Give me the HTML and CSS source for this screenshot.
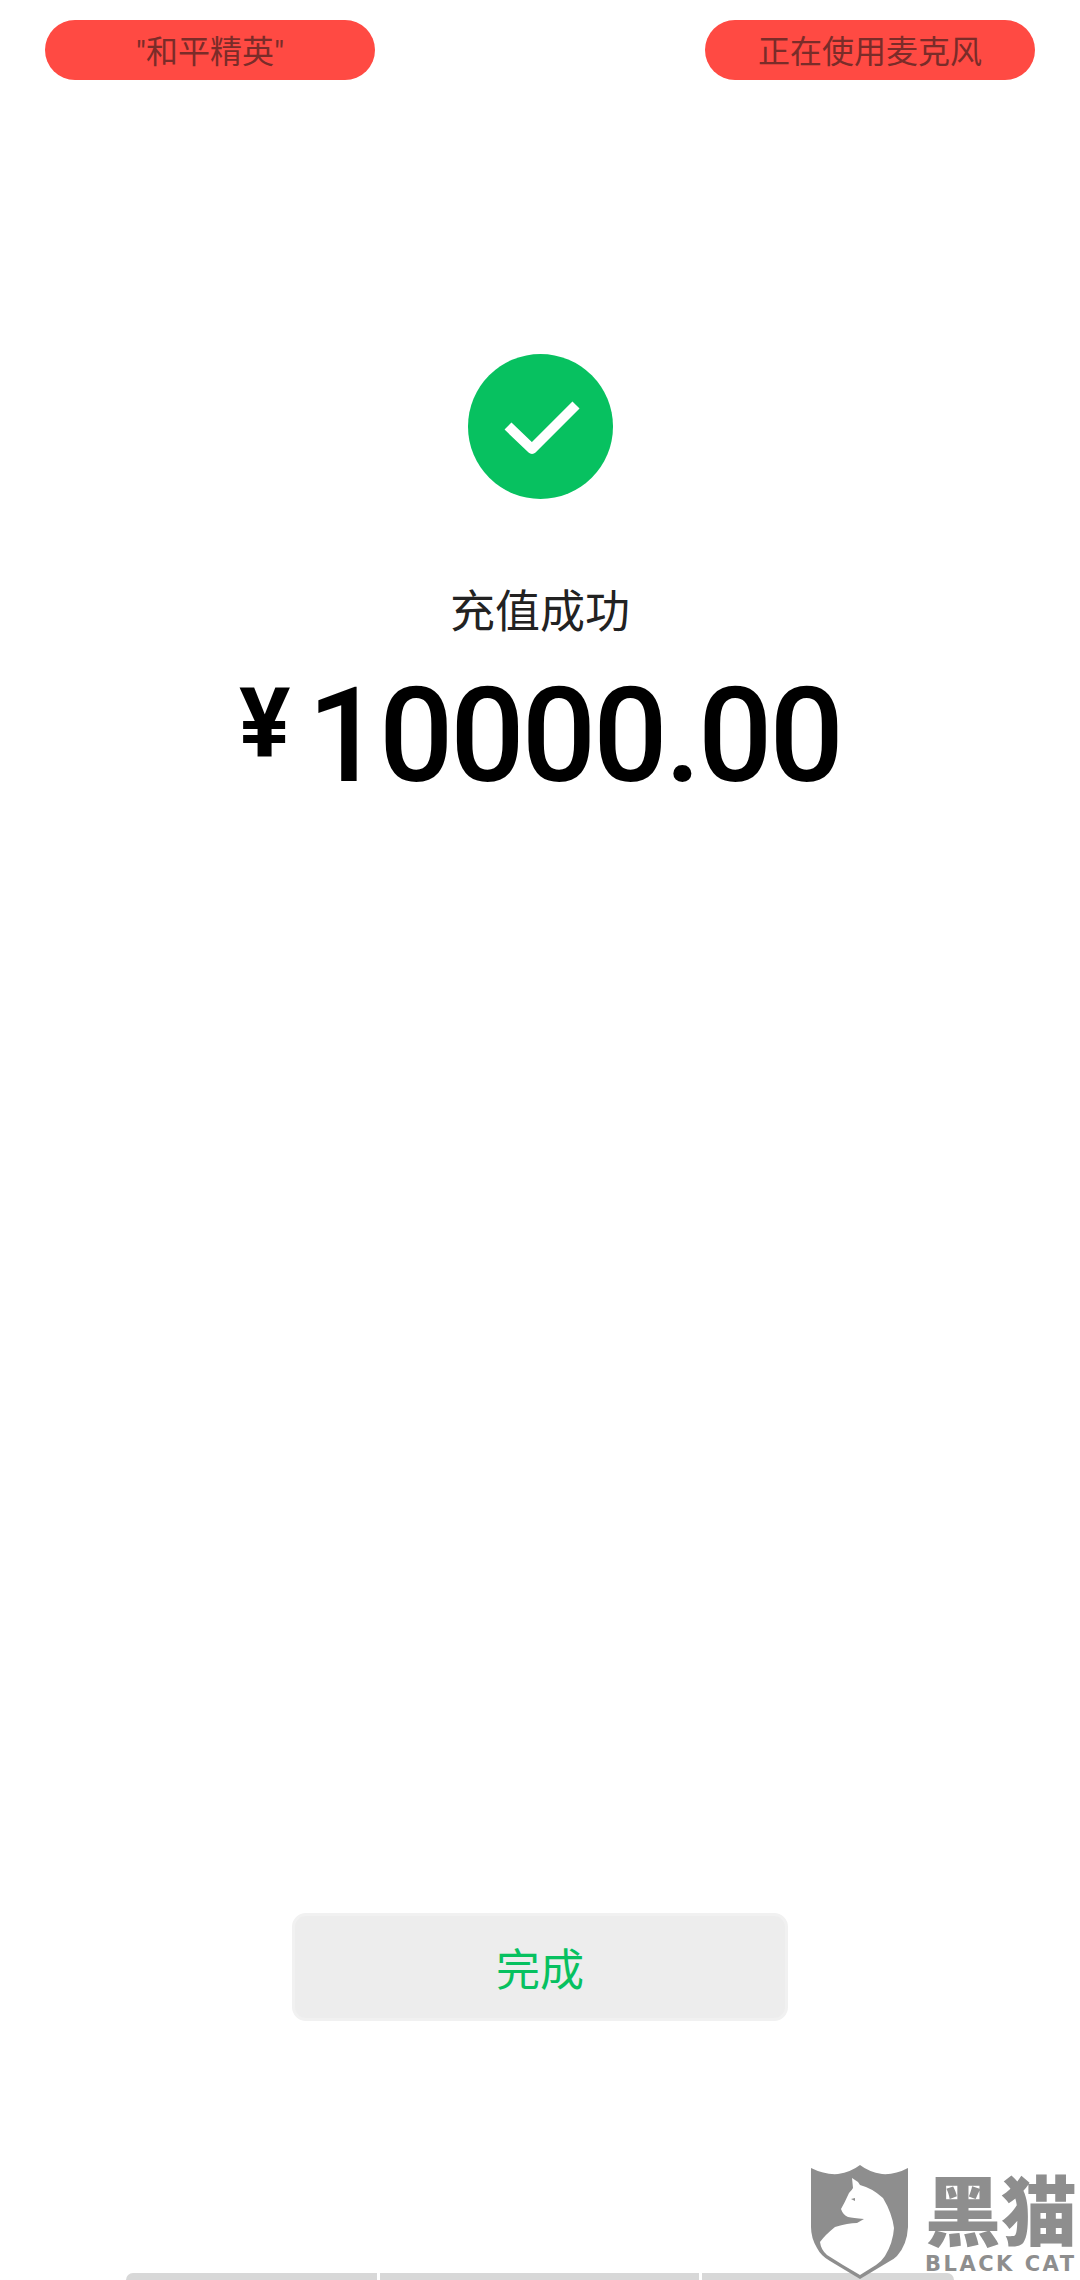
FILE: index.html
```html
<!DOCTYPE html>
<html lang="zh-CN">
<head>
    <meta charset="UTF-8">
    <meta name="viewport" content="width=device-width, initial-scale=1.0">
    <title>充值成功</title>
    <link rel="stylesheet" href="styles.css">
</head>
<body>
    <div class="page">
        <div class="status-row">
            <div class="status-pill">"和平精英"</div>
            <div class="status-pill">正在使用麦克风</div>
        </div>

        <div class="result">
            <svg class="result-icon" viewBox="0 0 145 145">
                <circle cx="72.500" cy="72.500" r="72.500" fill="#07c160"/>
                <path d="M40 72 L64 95 L108 51" fill="none" stroke="#fff" stroke-width="10" stroke-linejoin="round"/>
            </svg>
            <div class="result-title">充值成功</div>
            <div class="result-amount"><span class="yen">¥</span>10000.00</div>
        </div>

        <button class="done-btn">完成</button>

        <div class="nav-bar">
            <span class="nav-seg nav-seg-left"></span>
            <span class="nav-seg nav-seg-mid"></span>
            <span class="nav-seg nav-seg-right"></span>
        </div>

        <!-- 水印 -->
        <div class="watermark">
            <svg class="watermark-shield" viewBox="0 0 110 120">
                <path d="M6 8 Q20 15 33 14 Q46 12 55 5 Q64 12 77 14 Q90 15 103 8 L103 67 Q102 85 92 96 Q89 99 85 101 L55 119 L25 101 Q16 96 12 88 Q6 78 6 67 Z" fill="#8e8e8e"/>
                <path d="M47 18 L53 22 L55 25 Q67 28 78 38 Q87 53 89 68 Q88 83 80 96 Q76 102 71 105 L55 115 L38 105 L22 95 Q16 90 15 82 Q20 75 30 67 Q43 63 52 63 L59 59 Q48 58 43 57 Q38 55 36 49 Q40 42 44 33 Q47 30 48 28 Z" fill="#fff"/>
                <path d="M46 39 L50 38 L50 41 Z" fill="#8e8e8e"/>
            </svg>
            <div class="watermark-text">
                <div class="watermark-cn">黑猫</div>
                <div class="watermark-en">BLACK CAT</div>
            </div>
        </div>
    </div>
</body>
</html>
```

FILE: styles.css
```css
html, body {
    margin: 0;
    padding: 0;
    background-color: #fff;
}
.page {
    position: relative;
    width: 1080px;
    height: 2280px;
    overflow: hidden;
    display: flex;
    flex-direction: column;
    align-items: center;
    font-family: "Noto Sans CJK SC", "Noto Sans", sans-serif;
}
.status-row {
    width: 990px;
    margin-top: 20px;
    display: flex;
    justify-content: space-between;
}
.status-pill {
    width: 330px;
    height: 60px;
    border-radius: 30px;
    background-color: #ff4a43;
    color: #7a2c29;
    font-family: Roboto, "Noto Sans CJK SC", sans-serif;
    font-size: 32px;
    line-height: 64px;
    text-align: center;
}
.result {
    margin-top: 274px;
    display: flex;
    flex-direction: column;
    align-items: center;
}
.result-icon {
    width: 145px;
    height: 145px;
    display: block;
}
.result-title {
    margin-top: 78px;
    font-size: 45px;
    line-height: 64px;
    color: #222;
}
.result-amount {
    margin-top: 20px;
    font-family: Roboto, sans-serif;
    font-weight: 500;
    font-size: 131px;
    line-height: 150px;
    letter-spacing: -3px;
    color: #000;
    display: flex;
    align-items: flex-start;
}
.yen {
    font-size: 96px;
    font-weight: 700;
    line-height: 124px;
    letter-spacing: 0;
    margin-right: 17px;
}
.done-btn {
    margin-top: auto;
    margin-bottom: 252px;
    width: 496px;
    height: 108px;
    box-sizing: border-box;
    border: 3px solid #f1f1f1;
    border-radius: 14px;
    background-color: #ededed;
    color: #07c160;
    font-family: inherit;
    font-size: 44px;
    padding: 0;
}
.nav-bar {
    width: 828px;
    height: 7px;
    display: flex;
    gap: 3px;
}
.nav-seg {
    height: 7px;
    background-color: #d8d8d8;
}
.nav-seg-left {
    width: 251px;
    border-top-left-radius: 7px;
}
.nav-seg-mid {
    width: 319px;
}
.nav-seg-right {
    flex: 1;
    border-top-right-radius: 7px;
}
.watermark {
    position: absolute;
    left: 805px;
    top: 2160px;
    display: flex;
    color: #8e8e8e;
}
.watermark-shield {
    width: 110px;
    height: 120px;
    display: block;
}
.watermark-text {
    margin-left: 10px;
}
.watermark-cn {
    margin-top: 5px;
    font-size: 76px;
    font-weight: 900;
    line-height: 84px;
    white-space: nowrap;
}
.watermark-en {
    margin-top: 3px;
    font-family: "DejaVu Sans", sans-serif;
    font-size: 21px;
    font-weight: 700;
    line-height: 24px;
    letter-spacing: 2.500px;
    white-space: nowrap;
}
```
